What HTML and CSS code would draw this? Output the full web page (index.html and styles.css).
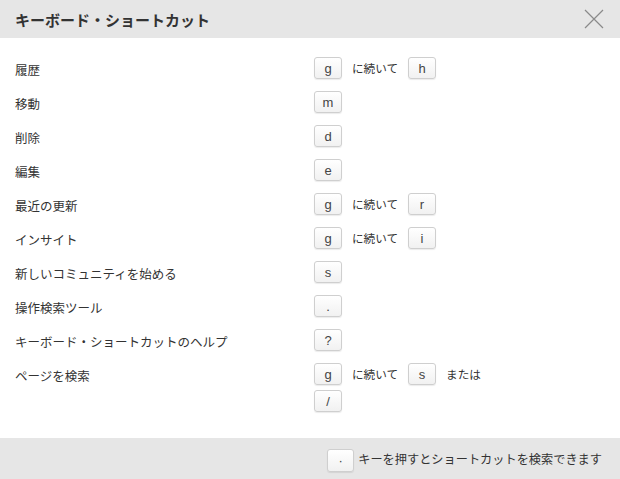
FILE: index.html
```html
<!DOCTYPE html>
<html lang="ja">
<head>
<meta charset="utf-8">
<link rel="stylesheet" href="styles.css">
</head>
<body>
<div class="dialog">
  <div class="header">
    <h1 class="title">キーボード・ショートカット</h1>
    <svg class="close" width="20" height="20" viewBox="0 0 20 20"><path d="M1 1L19 19M19 1L1 19" stroke="#8a8a8a" stroke-width="1.2" fill="none"/></svg>
  </div>
  <div class="body">
    <div class="row"><div class="label">履歴</div><div class="keys"><div class="line"><span class="key">g</span><span class="sep">に続いて</span><span class="key">h</span></div></div></div>
    <div class="row"><div class="label">移動</div><div class="keys"><div class="line"><span class="key">m</span></div></div></div>
    <div class="row"><div class="label">削除</div><div class="keys"><div class="line"><span class="key">d</span></div></div></div>
    <div class="row"><div class="label">編集</div><div class="keys"><div class="line"><span class="key">e</span></div></div></div>
    <div class="row"><div class="label">最近の更新</div><div class="keys"><div class="line"><span class="key">g</span><span class="sep">に続いて</span><span class="key">r</span></div></div></div>
    <div class="row"><div class="label">インサイト</div><div class="keys"><div class="line"><span class="key">g</span><span class="sep">に続いて</span><span class="key">i</span></div></div></div>
    <div class="row"><div class="label">新しいコミュニティを始める</div><div class="keys"><div class="line"><span class="key">s</span></div></div></div>
    <div class="row"><div class="label">操作検索ツール</div><div class="keys"><div class="line"><span class="key">.</span></div></div></div>
    <div class="row"><div class="label">キーボード・ショートカットのヘルプ</div><div class="keys"><div class="line"><span class="key">?</span></div></div></div>
    <div class="row"><div class="label">ページを検索</div><div class="keys"><div class="line"><span class="key">g</span><span class="sep">に続いて</span><span class="key">s</span><span class="sep">または</span></div><div class="line"><span class="key">/</span></div></div></div>
  </div>
  <div class="footer">
    <span class="key">·</span><span class="foot-text">キーを押すとショートカットを検索できます</span>
  </div>
</div>
</body>
</html>
```
FILE: styles.css
```css
* { box-sizing: border-box; }
html, body { margin: 0; padding: 0; background: #fff; }
body {
  font-family: "Noto Sans CJK JP", "Liberation Sans", sans-serif;
  color: #333;
  width: 620px;
  height: 479px;
  overflow: hidden;
}
.dialog {
  display: flex;
  flex-direction: column;
  height: 479px;
}
.header {
  height: 38px;
  background: #e6e6e6;
  display: flex;
  align-items: center;
  justify-content: space-between;
  padding: 0 16px 0 15px;
}
.title {
  margin: 0;
  font-size: 15px;
  font-weight: bold;
  color: #333;
  line-height: 1;
}
.close { display: block; }
.body {
  flex: 1;
  padding: 19px 0 0 15px;
  display: flex;
  flex-direction: column;
  gap: 12px;
}
.row {
  display: grid;
  grid-template-columns: 299px 1fr;
  align-items: start;
}
.label {
  font-size: 12.5px;
  line-height: 22px;
  height: 22px;
  padding-top: 2px;
}
.keys {
  display: flex;
  flex-direction: column;
  gap: 5px;
}
.line {
  display: flex;
  align-items: center;
  gap: 10px;
}
.key {
  display: inline-flex;
  align-items: center;
  justify-content: center;
  width: 28px;
  height: 22px;
  border: 1px solid #cfcfcf;
  border-radius: 3px;
  background: linear-gradient(#ffffff, #f1f1f1);
  box-shadow: 0 1px 1px rgba(0,0,0,0.08);
  font-family: "Liberation Sans", Arial, sans-serif;
  font-size: 13px;
  color: #444;
}
.sep {
  font-size: 11.6px;
  color: #333;
}
.footer {
  height: 41px;
  background: #e6e6e6;
  display: flex;
  align-items: center;
  justify-content: flex-end;
  padding: 0 18px 0 0;
}
.footer .key { height: 23px; width: 27px; margin-top: 3px; }
.foot-text {
  font-size: 12.2px;
  margin-left: 4px;
  color: #333;
}
```
